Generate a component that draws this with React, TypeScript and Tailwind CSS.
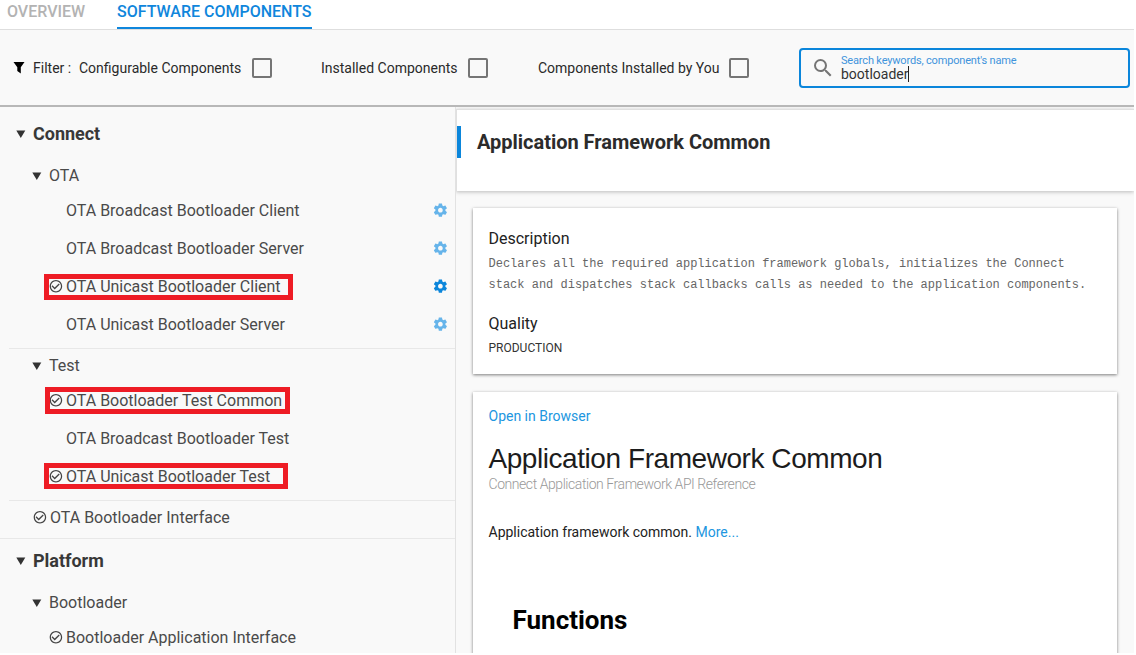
import React from "react";

type Item = { label: string; checked?: boolean; gear?: "light" | "dark"; box?: string };

const Caret = () => (
  <svg viewBox="0 0 10 8" className="mr-[7px] h-2 w-[10px] shrink-0">
    <path d="M.3 .4h9L4.8 7.9z" fill="#333" />
  </svg>
);

const Check = ({ className }: { className: string }) => (
  <svg viewBox="-.7 .4 24 24" className={`size-[15px] shrink-0 overflow-visible ${className}`} fill="#444">
    <path d="M16.59 7.58 10 14.17l-3.59-3.58L5 12l5 5 8-8zM12 2C6.48 2 2 6.48 2 12s4.48 10 10 10 10-4.48 10-10S17.52 2 12 2zm0 18c-4.42 0-8-3.58-8-8s3.58-8 8-8 8 3.58 8 8-3.58 8-8 8z" />
  </svg>
);

const Gear = ({ dark }: { dark: boolean }) => (
  <svg viewBox="-.6 -.3 24 24" className={`mr-[7px] ml-auto size-4 shrink-0 overflow-visible ${dark ? "fill-[#0b86db]" : "fill-[#66b4ea]"}`}>
    <path d="M19.43 12.98c.04-.32.07-.64.07-.98s-.03-.66-.07-.98l2.11-1.65c.19-.15.24-.42.12-.64l-2-3.46c-.12-.22-.39-.3-.61-.22l-2.49 1c-.52-.4-1.08-.73-1.69-.98l-.38-2.65C14.46 2.18 14.25 2 14 2h-4c-.25 0-.46.18-.49.42l-.38 2.65c-.61.25-1.17.59-1.69.98l-2.49-1c-.23-.09-.49 0-.61.22l-2 3.46c-.13.22-.07.49.12.64l2.11 1.65c-.04.32-.07.65-.07.98s.03.66.07.98l-2.11 1.65c-.19.15-.24.42-.12.64l2 3.46c.12.22.39.3.61.22l2.49-1c.52.4 1.08.73 1.69.98l.38 2.65c.03.24.24.42.49.42h4c.25 0 .46-.18.49-.42l.38-2.65c.61-.25 1.17-.59 1.69-.98l2.49 1c.23.09.49 0 .61-.22l2-3.46c.12-.22.07-.49-.12-.64l-2.11-1.65zM12 15.5c-1.93 0-3.5-1.57-3.5-3.5s1.57-3.5 3.5-3.5 3.5 1.57 3.5 3.5-1.57 3.5-3.5 3.5z" />
  </svg>
);

const Leaf = ({ label, checked, gear, box }: Item) => (
  <div className="relative flex h-[38px] items-center pl-[48px]">
    <span className="flex w-[18px] shrink-0">{checked && <Check className="" />}</span>
    <span className="pt-0.5">{label}</span>
    {gear && <Gear dark={gear === "dark"} />}
    {box && <span className={`absolute border-[5px] border-[#ee1c25] ${box}`} />}
  </div>
);

const ota: Item[] = [
  { label: "OTA Broadcast Bootloader Client", gear: "light" },
  { label: "OTA Broadcast Bootloader Server", gear: "light" },
  { label: "OTA Unicast Bootloader Client", checked: true, gear: "dark", box: "left-[44px] top-[7px] h-[26px] w-[249px]" },
  { label: "OTA Unicast Bootloader Server", gear: "light" },
];

const test: Item[] = [
  { label: "OTA Bootloader Test Common", checked: true, box: "left-[45px] top-[6px] h-[27px] w-[245px]" },
  { label: "OTA Broadcast Bootloader Test" },
  { label: "OTA Unicast Bootloader Test", checked: true, box: "left-[44px] top-[6px] h-[26px] w-[244px]" },
];

const Group = ({ label, className }: { label: string; className: string }) => (
  <div className={`flex items-center pl-8 ${className}`}>
    <Caret />
    {label}
  </div>
);

const Filter = ({ label, className }: { label: string; className: string }) => (
  <label className={`flex items-center justify-between ${className}`}>
    <span>{label}</span>
    <span className="size-5 rounded-[2px] border-2 border-[#757575]" />
  </label>
);

export default function App() {
  return (
    <div className="flex h-[655px] w-[1136px] flex-col overflow-hidden bg-white pr-[2px] pb-[2px] font-['Roboto',sans-serif] whitespace-nowrap">
      <nav className="flex h-[30px] shrink-0 border-b border-[#dedede] pl-[7px] text-base font-medium">
        <div className="w-[110px] pt-px leading-[22px] text-[#b3b3b3]">OVERVIEW</div>
        <div className="h-[29px] w-[195px] border-b-2 border-[#0f86dc] pt-px leading-[22px] text-[#0f86dc]">SOFTWARE COMPONENTS</div>
      </nav>

      <header className="flex h-[77px] shrink-0 items-center border-b-2 border-[#b8b8b8] bg-[#f9f9f9] text-sm text-[#2a2a2a]">
        <svg viewBox="0 0 12 13" className="ml-[13px] h-[13px] w-3">
          <path d="M.5 1h11L7.8 6.3v6.2L4.3 10V6.3z" fill="#000" />
        </svg>
        <span className="ml-[8px] w-[46px]">Filter :</span>
        <Filter label="Configurable Components" className="w-[193px]" />
        <Filter label="Installed Components" className="ml-[49px] w-[167px]" />
        <Filter label="Components Installed by You" className="ml-[50px] w-[211px]" />
        <div className="ml-[50px] flex h-10 w-[331px] items-center rounded border-2 border-[#0b86db]">
          <svg viewBox="0 0 24 24" className="ml-[10px] size-6" fill="#757575">
            <path d="M15.5 14h-.79l-.28-.27A6.47 6.47 0 0 0 16 9.5 6.5 6.5 0 1 0 9.5 16c1.61 0 3.09-.59 4.23-1.57l.27.28v.79l5 4.99L20.49 19zm-6 0C7.01 14 5 11.99 5 9.5S7.01 5 9.5 5 14 7.01 14 9.5 11.99 14 9.5 14z" />
          </svg>
          <div className="ml-[6px]">
            <div className="mb-px text-[11px] leading-[13px] tracking-[-0.17px] text-[#3f94dc]">Search keywords, component's name</div>
            <div className="flex h-[14px] items-center text-sm leading-[14px] text-[#333]">
              <span className="pb-0.5">bootloader</span>
              <span className="-mt-0.5 h-4 w-px shrink-0 bg-[#222]" />
            </div>
          </div>
        </div>
      </header>

      <div className="flex min-h-0 flex-1 bg-[#f9f9f9]">
        <aside className="w-[456px] shrink-0 overflow-hidden border-r border-[#e2e2e2] pt-px text-base text-[#4a4a4a]">
          <div className="flex h-[52px] items-center pl-4 text-lg font-bold tracking-[-0.02px] text-[#383838]">
            <Caret />
            Connect
          </div>
          <Group label="OTA" className="h-[31px]" />
          <div className="pb-[5px]">
            {ota.map((i) => (
              <Leaf key={i.label} {...i} />
            ))}
          </div>
          <div className="ml-[9px] border-t border-[#e8e8e8]" />
          <Group label="Test" className="h-8 pt-px" />
          <div className="pb-[5px]">
            {test.map((i) => (
              <Leaf key={i.label} {...i} />
            ))}
          </div>
          <div className="ml-[9px] border-t border-[#e8e8e8]" />
          <div className="mb-[5px] flex h-8 items-center pl-8">
            <Check className="mr-[3px]" />
            <span className="pt-0.5">OTA Bootloader Interface</span>
          </div>
          <div className="flex h-[45px] items-center border-t border-[#e8e8e8] pl-4 text-lg font-bold tracking-[-0.02px] text-[#383838]">
            <Caret />
            Platform
          </div>
          <Group label="Bootloader" className="h-[35px] pt-[4px]" />
          <Leaf label="Bootloader Application Interface" checked />
        </aside>

        <main className="flex min-w-0 flex-1 flex-col overflow-hidden pt-[2px]">
          <div className="flex h-[82px] shrink-0 border-t border-l border-[#e0e0e0] bg-white pt-4 shadow-[0_1px_4px_rgba(0,0,0,0.25)]">
            <div className="h-8 w-1 bg-[#0b86db]" />
            <h1 className="ml-4 text-xl leading-8 font-bold tracking-[-0.02px] text-[#2b2b2b]">Application Framework Common</h1>
          </div>
          <section className="mt-[17px] ml-[16.5px] h-[166px] w-[644px] shrink-0 bg-white pt-[19px] pl-4 shadow-[0_1px_3px_rgba(0,0,0,0.5)]">
            <h2 className="text-base leading-6 text-[#222]">Description</h2>
            <p className="mt-[3px] font-['Liberation_Mono',monospace] text-xs leading-[21px] text-[#666]">
              Declares all the required application framework globals, initializes the Connect
              <br />
              stack and dispatches stack callbacks calls as needed to the application components.
            </p>
            <h2 className="mt-[16px] text-base leading-6 text-[#222]">Quality</h2>
            <p className="mt-[2px] text-xs leading-5 text-[#333]">PRODUCTION</p>
          </section>
          <section className="mt-[18px] ml-[16.5px] h-[400px] w-[644px] shrink-0 bg-white pt-[14px] pl-4 shadow-[0_1px_3px_rgba(0,0,0,0.5)]">
            <a className="block text-sm leading-5 text-[#2196e0]">Open in Browser</a>
            <h1 className="mt-[17px] font-['Liberation_Sans',Arial,sans-serif] text-[28px] leading-8 tracking-[-0.44px] text-[#1c1c1c]">Application Framework Common</h1>
            <p className="pt-px text-sm leading-4 font-light tracking-[-0.44px] text-[#999]">Connect Application Framework API Reference</p>
            <p className="mt-[30px] text-sm leading-5 text-[#222]">
              Application framework common. <a className="text-[#2196e0]">More...</a>
            </p>
            <h2 className="mt-[62px] ml-6 text-[26px] leading-8 font-bold text-black">Functions</h2>
          </section>
        </main>
      </div>
    </div>
  );
}
